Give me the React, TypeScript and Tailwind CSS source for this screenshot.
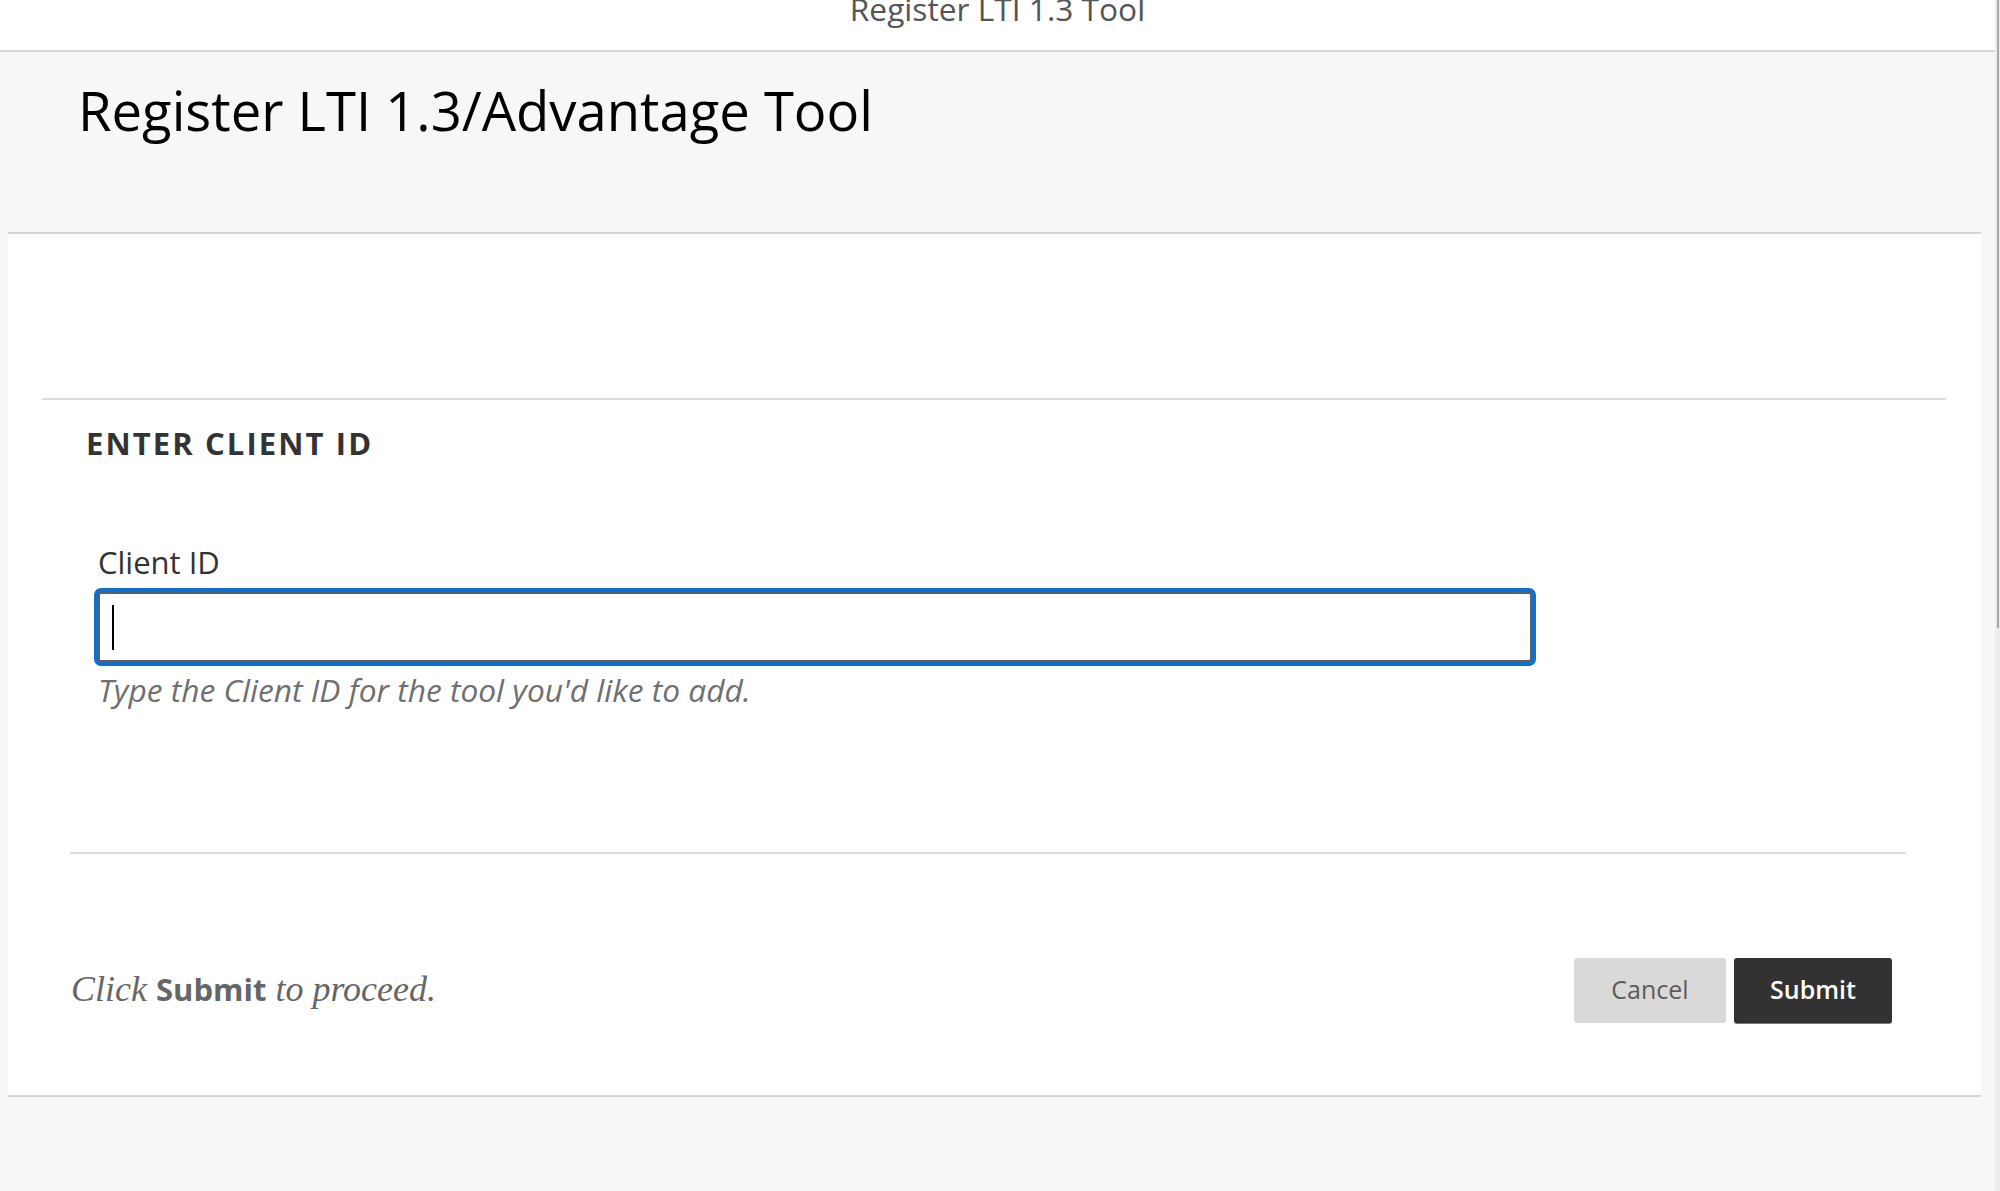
import React from "react";

export default function App() {
  const sans = { fontFamily: '"Open Sans", "Noto Sans", sans-serif' };
  return (
    <div className="w-[2000px] h-[1191px] bg-[#f7f7f7] flex overflow-hidden" style={sans}>
      <div className="w-[1995px] flex flex-col">
        {/* top bar */}
        <div className="h-[52px] bg-white border-b-2 border-[#d6d6d6] overflow-hidden flex justify-center">
          <div className="mt-[-7px] text-[31.7px] leading-[32px] text-[#555555]">Register LTI 1.3 Tool</div>
        </div>
        {/* title area */}
        <div className="h-[180px] pl-[78px] pt-[31px]">
          <h1 className="text-[54.4px] leading-[55px] text-black font-normal">Register LTI 1.3/Advantage Tool</h1>
        </div>
        {/* panel */}
        <div className="ml-[8px] w-[1973px] bg-white border-t-2 border-b-2 border-[#d6d6d6] flex flex-col">
          <div className="h-[164px]" />
          <div className="ml-[34px] mr-[35px] border-t-2 border-[#dcdcdc] flex flex-col">
            <h2 className="mt-[28px] pl-[44px] text-[31px] leading-[31px] font-bold tracking-[2.1px] text-[#333333]">
              ENTER CLIENT ID
            </h2>
            <div className="pl-[56px] flex flex-col">
              <label className="mt-[88px] text-[31px] leading-[31px] text-[#333333]">Client ID</label>
              <div className="mt-[14px] w-[1434px] h-[70px] border-2 border-[#5f5f5f] rounded-[3px] bg-white shadow-[0_0_0_4px_#0d6fd0] flex items-center pl-[12px]">
                <span className="block w-[2px] h-[45px] bg-black" />
              </div>
              <p className="mt-[12px] text-[31.7px] leading-[31px] italic text-[#6f6f6f]">
                Type the Client ID for the tool you'd like to add.
              </p>
            </div>
          </div>
          <div className="mt-[147px] ml-[62px] w-[1836px] border-t-2 border-[#dcdcdc]" />
          <div className="mt-[104px] pl-[63px] pr-[89px] pb-[72px] flex items-center justify-between">
            <p
              className="text-[36px] leading-[36px] italic text-[#666666] mt-[-3px]"
              style={{ fontFamily: '"Liberation Serif", serif' }}
            >
              Click{" "}
              <span className="not-italic font-bold text-[31px]" style={sans}>
                Submit
              </span>{" "}
              to proceed.
            </p>
            <div className="flex gap-[8px]">
              <button className="w-[152px] h-[65px] rounded-[3px] bg-[#d9d9d9] text-[#5c5c5c] text-[25px] leading-[25px] pb-[2px]">
                Cancel
              </button>
              <button className="w-[158px] h-[65px] rounded-[3px] bg-[#323232] text-white text-[25px] leading-[25px] font-semibold pb-[2px] shadow-[0_1px_0_#777]">
                Submit
              </button>
            </div>
          </div>
        </div>
        <div className="flex-1" />
      </div>
      <div className="w-[5px] bg-[#ececec]">
        <div className="ml-[2px] w-[2px] h-[628px] bg-[#a9a9a9]" />
      </div>
    </div>
  );
}
